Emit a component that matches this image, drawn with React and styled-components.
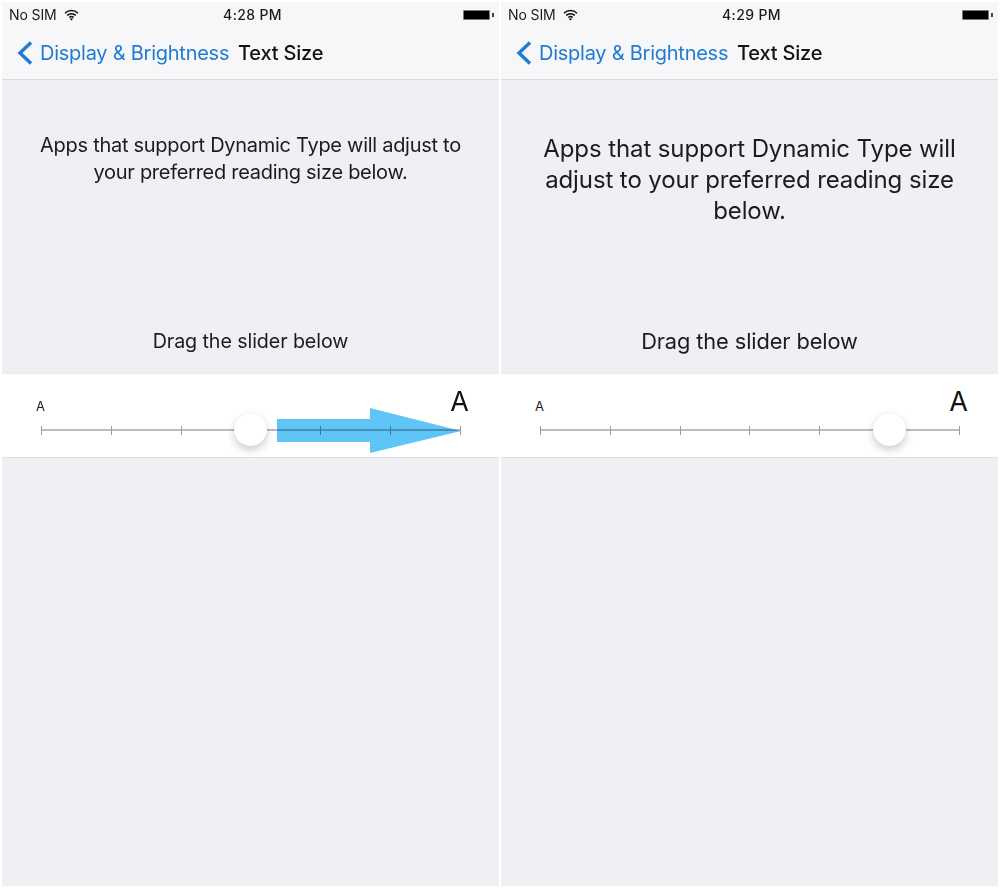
import React from 'react';
import styled, { createGlobalStyle } from 'styled-components';

const GlobalStyle = createGlobalStyle`
  html, body {
    margin: 0;
    background: #fff;
  }
  body {
    font-family: Inter, "Noto Sans", "Liberation Sans", sans-serif;
    color: #1c1c1e;
  }
`;

const Page = styled.div`
  display: grid;
  grid-template-columns: 497px 497px;
  column-gap: 2px;
  padding: 2px;
  width: 1000px;
  height: 888px;
  box-sizing: border-box;
`;

const Screen = styled.div`
  display: flex;
  flex-direction: column;
  height: 884px;
  background: #efeff4;
`;

const TopBar = styled.div`
  flex: none;
  height: 77px;
  background: #f7f7f9;
  border-bottom: 1px solid #dcdcde;
`;

const StatusBar = styled.div`
  display: grid;
  grid-template-columns: 1fr auto 1fr;
  align-items: center;
  height: 25px;
  padding: 0 8px 0 7px;
  font-size: 14px;
`;

const Carrier = styled.div`
  display: flex;
  align-items: center;
  gap: 7px;
  letter-spacing: -0.1px;
`;

const Clock = styled.div`
  padding-left: 5px;
  font-weight: 500;
  letter-spacing: 0.35px;
`;

const Battery = styled.div`
  justify-self: end;
  position: relative;
  width: 25px;
  height: 8px;
  background: #000;
  border: 1.5px solid #777;
  border-radius: 1px;
  margin-right: 1px;

  &::after {
    content: '';
    position: absolute;
    right: -4.5px;
    top: 2px;
    width: 2px;
    height: 4px;
    background: #444;
  }
`;

const NavBar = styled.div`
  display: flex;
  align-items: center;
  height: 50px;
  padding: 2px 0 0 15px;
  box-sizing: border-box;
  font-size: 20px;
`;

const BackLink = styled.div`
  display: flex;
  align-items: center;
  gap: 7px;
  width: 221px;
  color: #1f7bd3;
  letter-spacing: -0.25px;
`;

const NavTitle = styled.div`
  font-weight: 500;
  color: #111;
  letter-spacing: -0.2px;
`;

const TextArea = styled.div`
  flex: none;
  height: 293px;
  box-sizing: border-box;
  display: flex;
  flex-direction: column;
  justify-content: space-between;
  align-items: center;
  padding: ${p => (p.$large ? '53px 30px 18px' : '52px 30px 18px')};
  text-align: center;
  font-size: ${p => (p.$large ? '24px' : '20px')};
  line-height: ${p => (p.$large ? '31px' : '27px')};
  letter-spacing: ${p => (p.$large ? '-0.1px' : '-0.28px')};
`;

const Intro = styled.div`
  max-width: 430px;
`;

const Hint = styled.div`
  font-size: ${p => (p.$large ? '21.8px' : '19.7px')};
  line-height: 27px;
  letter-spacing: -0.1px;
`;

const SliderBand = styled.div`
  flex: none;
  height: 85px;
  box-sizing: border-box;
  background: #fff;
  border-top: 1px solid #e9e9ed;
  border-bottom: 1px solid #dedee2;
  padding: 0 38px 0 39px;
  position: relative;
`;

const Labels = styled.div`
  display: flex;
  justify-content: space-between;
  align-items: baseline;
  height: 39px;
  box-sizing: border-box;
  padding-top: 13px;
  margin: 0 -8px 0 -5px;
`;

const SmallA = styled.span`
  font-size: 13px;
  line-height: 14px;
`;

const LargeA = styled.span`
  font-size: 27px;
  line-height: 30px;
  color: #111;
`;

const Track = styled.div`
  position: relative;
  display: flex;
  justify-content: space-between;
  align-items: center;
  height: 9px;
  margin-top: 13px;

  &::before {
    content: '';
    position: absolute;
    left: 0;
    right: 0;
    top: 3px;
    height: 2px;
    background: #bcbcbc;
  }
`;

const Tick = styled.i`
  position: relative;
  display: block;
  width: 1px;
  height: 9px;
  background: #9c9c9c;
`;

const Thumb = styled.div`
  position: absolute;
  top: 50%;
  width: 33px;
  height: 33px;
  margin: -17.5px 0 0 -17.5px;
  border-radius: 50%;
  background: #fff;
  box-shadow: 0 4px 8px rgba(0, 0, 0, 0.2), 0 0 1px rgba(0, 0, 0, 0.1);
`;

const Arrow = styled.svg`
  position: absolute;
  left: 275px;
  top: 34px;
  mix-blend-mode: multiply;
`;

const BackChevron = () => (
  <svg width="16" height="24" viewBox="0 0 16 24">
    <path d="M14 1.5 L3 12 L14 22.5" fill="none" stroke="#1f7bd3" strokeWidth="3.4" />
  </svg>
);

const Wifi = () => (
  <svg width="15" height="12" viewBox="0 0 15 12">
    <g fill="none" stroke="#111" strokeWidth="1.5">
      <path d="M1 4.2 A9.2 9.2 0 0 1 14 4.2" />
      <path d="M3.2 6.4 A6.1 6.1 0 0 1 11.8 6.4" />
      <path d="M5.4 8.6 A3 3 0 0 1 9.6 8.6" />
    </g>
    <path d="M7.5 11.6 L5.9 9.9 A2.3 2.3 0 0 1 9.1 9.9 Z" fill="#111" />
  </svg>
);

const Phone = ({ time, large, value, arrow }) => (
  <Screen>
    <TopBar>
      <StatusBar>
        <Carrier>
          No SIM
          <Wifi />
        </Carrier>
        <Clock>{time}</Clock>
        <Battery />
      </StatusBar>
      <NavBar>
        <BackLink>
          <BackChevron />
          Display &amp; Brightness
        </BackLink>
        <NavTitle>Text Size</NavTitle>
      </NavBar>
    </TopBar>
    <TextArea $large={large}>
      <Intro>
        {large ? (
          <>Apps that support Dynamic Type will<br />adjust to your preferred reading size<br />below.</>
        ) : (
          <>Apps that support Dynamic Type will adjust to<br />your preferred reading size below.</>
        )}
      </Intro>
      <Hint $large={large}>Drag the slider below</Hint>
    </TextArea>
    <SliderBand>
      <Labels>
        <SmallA>A</SmallA>
        <LargeA>A</LargeA>
      </Labels>
      <Track>
        {[0, 1, 2, 3, 4, 5, 6].map(i => <Tick key={i} />)}
        <Thumb style={{ left: `${(value / 6) * 100}%` }} />
      </Track>
      {arrow && (
        <Arrow width="185" height="46" viewBox="0 0 185 46">
          <path d="M0 11 H93 V0 L184 23 L93 45 V34 H0 Z" fill="#5fc4f6" />
        </Arrow>
      )}
    </SliderBand>
  </Screen>
);

export default function App() {
  return (
    <>
      <GlobalStyle />
      <Page>
        <Phone time="4:28 PM" value={3} arrow />
        <Phone time="4:29 PM" value={5} large />
      </Page>
    </>
  );
}
